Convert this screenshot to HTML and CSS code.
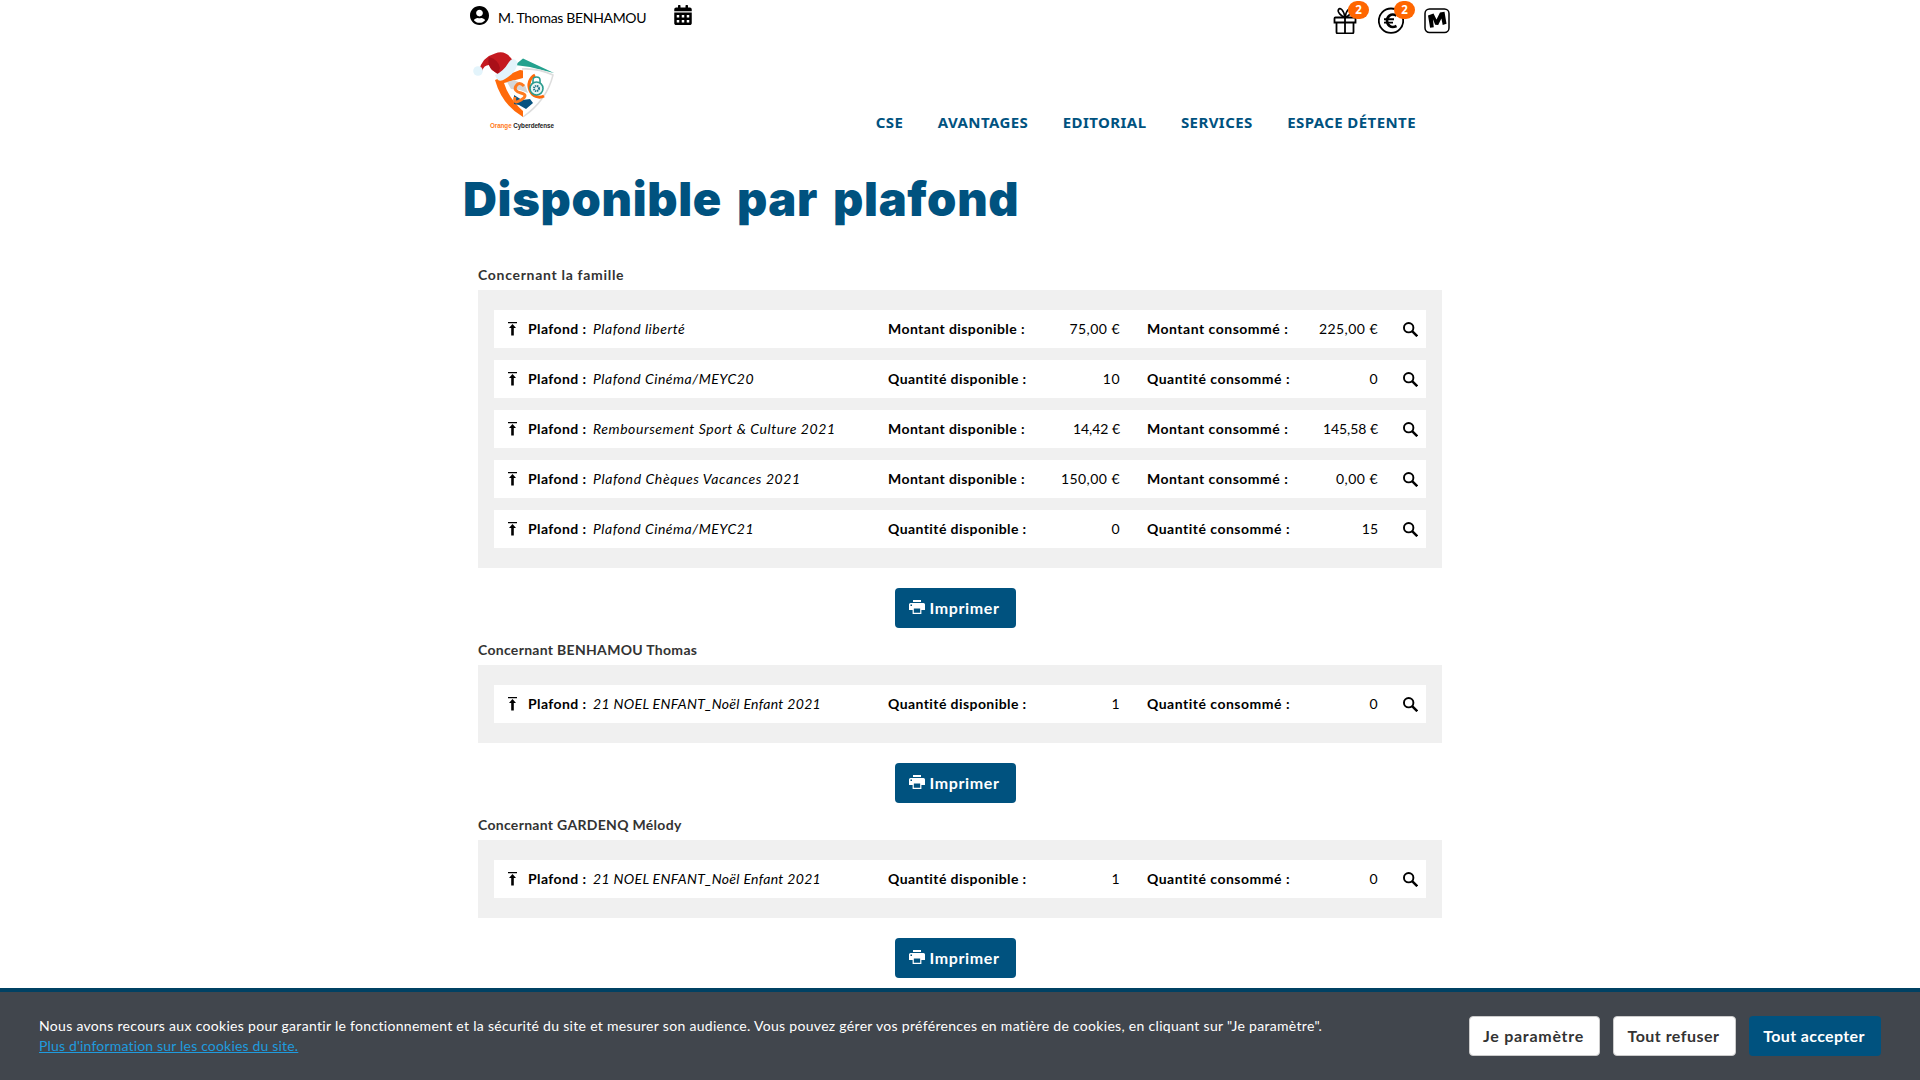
FILE: index.html
```html
<!DOCTYPE html>
<html lang="fr">
<head>
<meta charset="utf-8">
<title>Disponible par plafond</title>
<link rel="stylesheet" href="styles.css">
</head>
<body>
<svg class="sprite" aria-hidden="true">
  <symbol id="top" viewBox="0 0 9 14"><path d="M0 0h9v1.200H0zM4.500 2L8 6H5.800v7.500H3.200V6H1z"/></symbol>
  <symbol id="search" viewBox="0 0 14 14"><circle cx="5.300" cy="5.300" r="4.400" fill="none" stroke="#000" stroke-width="1.800"/><path d="M8.300 8.300l5 5" stroke="#000" stroke-width="2.300"/></symbol>
  <symbol id="print" viewBox="0 0 16 14"><path d="M4 0h8v2H4zM1.500 3h13Q16 3 16 4.500V10H0V4.500Q0 3 1.500 3z"/><path d="M4.200 8h7.600v5.300H4.200z" fill="#00527f" stroke="#fff" stroke-width="1.200"/><path d="M1.500 4.500H3V6H1.500z" fill="#00527f"/></symbol>
</svg>
<div class="page">
  <header>
    <div class="topbar">
      <svg class="user-icon" viewBox="0 8 496 496"><path d="M248 8C111 8 0 119 0 256s111 248 248 248 248-111 248-248S385 8 248 8zm0 96c48.600 0 88 39.400 88 88s-39.400 88-88 88-88-39.400-88-88 39.400-88 88-88zm0 344c-58.700 0-111.300-26.600-146.500-68.200 18.800-35.400 55.600-59.800 98.500-59.800 2.400 0 4.800.4 7.100 1.100 13 4.200 26.600 6.900 40.900 6.900 14.300 0 28-2.700 40.900-6.900 2.300-.7 4.700-1.100 7.100-1.100 42.900 0 79.700 24.400 98.500 59.800C359.300 421.400 306.700 448 248 448z"/></svg>
      <span class="user-name">M. Thomas BENHAMOU</span>
      <svg class="cal-icon" viewBox="0 0 448 512"><path fill-rule="evenodd" d="M0 464c0 26.500 21.500 48 48 48h352c26.500 0 48-21.500 48-48V192H0zM64 256h64v64H64zM192 256h64v64h-64zM320 256h64v64h-64zM64 384h64v64H64zM192 384h64v64h-64zM320 384h64v64h-64zM400 64h-48V16c0-8.800-7.200-16-16-16h-32c-8.800 0-16 7.200-16 16v48H160V16c0-8.800-7.200-16-16-16h-32c-8.800 0-16 7.200-16 16v48H48C21.500 64 0 85.500 0 112v48h448v-48c0-26.500-21.500-48-48-48z"/></svg>
      <div class="shortcuts">
        <span class="shortcut"><svg viewBox="0 0 26 28" fill="none" stroke="#000" stroke-width="1.800"><path d="M2.500 12.500q0-1 1-1h19q1 0 1 1v4h-21zM4.500 16.500v9.500q0 1.500 1.500 1.500h14q1.500 0 1.500-1.500v-9.500M13 11.500v16"/><path d="M13 11.500C9 10 5 6 6.500 3.500S12 4 13 11.500zM13 11.500C17 10 21 6 19.500 3.500S14 4 13 11.500z" stroke-width="1.600"/></svg><b class="badge">2</b></span>
        <span class="shortcut"><svg viewBox="0 0 26 28" fill="none" stroke="#000"><circle cx="13" cy="14.700" r="12.200" stroke-width="1.800"/><path d="M18.500 9.500C12.500 6.500 9 11 9 14.700S12.500 23 18.500 20" stroke-width="2.600"/><path d="M6 13.300h10M6 16.600h9" stroke-width="1.900"/></svg><b class="badge">2</b></span>
        <span class="shortcut"><svg viewBox="0 0 26 28"><rect x="1" y="2.900" width="24" height="23.700" rx="4.500" fill="none" stroke="#000" stroke-width="1.500"/><path d="M4 9.500l5.500-2 3 6 3.500-7 4.500-.8 2 12-3.800 1.300-1.300-6.500-3.200 6.500-3-.3-2.300-5.500.9 8-3.700.5z"/></svg></span>
      </div>
    </div>
    <div class="brandbar">
      <svg class="logo" viewBox="0 0 90 84">
        <path d="M45 17L53 10.500 84 25 60 19z" fill="#24a18e"/>
        <path d="M52 21Q68 20 83 27Q77 52 53 69" fill="#fff" stroke="#ddd" stroke-width="1.500"/>
        <path d="M25 32L50 22l3 .5v7.500L34 35Q39 51 53 63v6Q32 57 25 32z" fill="#ff6a0a"/>
        <path d="M37 34l7-2 11 5 3 8-8-3-9-1z" fill="#d4d6d8"/>
        <path d="M44 47l8 5 8-1 3 4-7 6-7-4-5-1z" fill="#07527f"/>
        <path d="M54 38Q49 33 46 38T51 45 51 52 45 49" fill="none" stroke="#ff7a20" stroke-width="3"/>
        <path d="M65 27A10 11 0 1 0 74 48" fill="none" stroke="#ff6a0a" stroke-width="3"/>
        <path d="M63 35v-3q0-3 3.500-3t3.500 3v3" fill="none" stroke="#2b9c8f" stroke-width="1.600"/>
        <circle cx="66.500" cy="40.500" r="6.500" fill="#e8f5f3" stroke="#2b9c8f" stroke-width="1.600"/>
        <circle cx="66.500" cy="40.500" r="2.500" fill="none" stroke="#23758a" stroke-width="2" stroke-dasharray="1.300 .7"/>
        <path d="M9 23Q12 9 25 5.500Q36 1 43 13L29 27 22 22 19 17Q14 17 12 23z" fill="#c51a20"/>
        <path d="M19 9Q29 12 30 20L28 26 21 21Q17 15 19 9z" fill="#a90f18"/>
        <path d="M25 27Q33 24 39 14Q43 8 47.500 14Q48 23 35 31Q28 36 25 27z" fill="#e3f4fb"/>
        <circle cx="8" cy="23" r="4.800" fill="#e3f4fb"/>
        <text x="20" y="80" class="logo-text" textLength="64"><tspan fill="#ff7a20">Orange</tspan> Cyberdefense</text>
      </svg>
      <nav><a>CSE</a><a>AVANTAGES</a><a>EDITORIAL</a><a>SERVICES</a><a>ESPACE DÉTENTE</a></nav>
    </div>
  </header>
  <h1>Disponible par plafond</h1>
  <main>
    <section>
      <h2 class="wide">Concernant la famille</h2>
      <div class="panel">
        <div class="row"><svg class="top-icon"><use href="#top"/></svg><div class="name"><b>Plafond :</b><i>Plafond liberté</i></div><b>Montant disponible :</b><span class="val">75,00 €</span><b class="used">Montant consommé :</b><span class="val">225,00 €</span><svg class="search-icon"><use href="#search"/></svg></div>
        <div class="row"><svg class="top-icon"><use href="#top"/></svg><div class="name"><b>Plafond :</b><i>Plafond Cinéma/MEYC20</i></div><b>Quantité disponible :</b><span class="val">10</span><b class="used">Quantité consommé :</b><span class="val">0</span><svg class="search-icon"><use href="#search"/></svg></div>
        <div class="row"><svg class="top-icon"><use href="#top"/></svg><div class="name"><b>Plafond :</b><i class="loose">Remboursement Sport &amp; Culture 2021</i></div><b>Montant disponible :</b><span class="val narrow">14,42 €</span><b class="used">Montant consommé :</b><span class="val narrow">145,58 €</span><svg class="search-icon"><use href="#search"/></svg></div>
        <div class="row"><svg class="top-icon"><use href="#top"/></svg><div class="name"><b>Plafond :</b><i class="looser">Plafond Chèques Vacances 2021</i></div><b>Montant disponible :</b><span class="val">150,00 €</span><b class="used">Montant consommé :</b><span class="val">0,00 €</span><svg class="search-icon"><use href="#search"/></svg></div>
        <div class="row"><svg class="top-icon"><use href="#top"/></svg><div class="name"><b>Plafond :</b><i>Plafond Cinéma/MEYC21</i></div><b>Quantité disponible :</b><span class="val">0</span><b class="used">Quantité consommé :</b><span class="val narrow">15</span><svg class="search-icon"><use href="#search"/></svg></div>
      </div>
      <button class="btn print"><svg class="print-icon"><use href="#print"/></svg>Imprimer</button>
    </section>
    <section>
      <h2>Concernant BENHAMOU Thomas</h2>
      <div class="panel">
        <div class="row"><svg class="top-icon"><use href="#top"/></svg><div class="name"><b>Plafond :</b><i class="tight">21 NOEL ENFANT_Noël Enfant 2021</i></div><b>Quantité disponible :</b><span class="val">1</span><b class="used">Quantité consommé :</b><span class="val">0</span><svg class="search-icon"><use href="#search"/></svg></div>
      </div>
      <button class="btn print"><svg class="print-icon"><use href="#print"/></svg>Imprimer</button>
    </section>
    <section>
      <h2>Concernant GARDENQ Mélody</h2>
      <div class="panel">
        <div class="row"><svg class="top-icon"><use href="#top"/></svg><div class="name"><b>Plafond :</b><i class="tight">21 NOEL ENFANT_Noël Enfant 2021</i></div><b>Quantité disponible :</b><span class="val">1</span><b class="used">Quantité consommé :</b><span class="val">0</span><svg class="search-icon"><use href="#search"/></svg></div>
      </div>
      <button class="btn print"><svg class="print-icon"><use href="#print"/></svg>Imprimer</button>
    </section>
  </main>
</div>
<div class="cookies">
  <p>Nous avons recours aux cookies pour garantir le fonctionnement et la sécurité du site et mesurer son audience. Vous pouvez gérer vos préférences en matière de cookies, en cliquant sur "Je paramètre".<br><a class="more">Plus d'information sur les cookies du site.</a></p>
  <div class="choices">
    <button class="btn light settings">Je paramètre</button>
    <button class="btn light refuse">Tout refuser</button>
    <button class="btn accept">Tout accepter</button>
  </div>
</div>
</body>
</html>
```
FILE: styles.css
```css
* { box-sizing: border-box; }
html, body { height: 100%; }
body {
  margin: 0;
  overflow: hidden;
  background: #fff;
  color: #000;
  font: 14px/20px Lato, "Open Sans", sans-serif;
  display: flex;
  flex-direction: column;
}
svg { display: block; flex: none; }
.sprite { width: 0; height: 0; position: absolute; }
.page { flex: 1; width: 994px; margin: 0 auto; min-height: 0; }

.topbar { display: flex; height: 48px; padding-left: 7px; }
.user-icon { width: 19px; height: 19px; margin-top: 6px; }
.user-name { margin: 8px 0 0 9px; width: 176px; letter-spacing: -.32px; }
.cal-icon { width: 18px; height: 20px; margin-top: 5px; }
.shortcuts { display: flex; gap: 20px; margin: 6px 7px 0 auto; }
.shortcut { position: relative; width: 26px; height: 28px; }
.shortcut svg { width: 26px; height: 28px; }
.badge {
  position: absolute;
  left: 16px;
  top: -5px;
  width: 21px;
  height: 18px;
  border-radius: 9px;
  background: #f60;
  color: #fff;
  font: 700 11.5px/18px "Open Sans", sans-serif;
  text-align: center;
}
.brandbar { display: flex; height: 92px; padding-left: 7px; }
.logo { width: 90px; height: 84px; }
.logo-text { font: 700 6.3px "Liberation Sans", sans-serif; fill: #222; }
nav {
  display: flex;
  gap: 34.5px;
  margin: 64px 41px 0 auto;
  color: #00527f;
  font: 700 15px/20px "Noto Sans", sans-serif;
  letter-spacing: .42px;
}

h1 {
  margin: 0;
  height: 120px;
  color: #00527f;
  font: 900 47px/117px Inter, sans-serif;
  letter-spacing: .65px;
  word-spacing: 5px;
}
main { padding: 0 15px; }
h2 { margin: 0; color: #333; font-size: 14px; line-height: 30px; letter-spacing: .3px; }
h2.wide { letter-spacing: .7px; }
section { display: flex; flex-direction: column; margin-bottom: 7px; }
.panel { display: grid; gap: 12px; padding: 20px 16px; margin-bottom: 20px; background: #f0f0f0; }
.row {
  display: grid;
  grid-template-columns: 20px 360px 140px 92px 167px 91px 1fr;
  align-items: center;
  height: 38px;
  padding: 0 8px 0 14px;
  background: #fff;
  letter-spacing: .42px;
}
.name { display: flex; gap: 6px; white-space: nowrap; }
.name b { width: 59px; letter-spacing: .4px; }
.name i { letter-spacing: .52px; }
.name i.loose { letter-spacing: .56px; }
.name i.looser { letter-spacing: .6px; }
.name i.tight { letter-spacing: .33px; }
.val { text-align: right; letter-spacing: .45px; }
.val.narrow { letter-spacing: -.05px; }
.used { padding-left: 27px; white-space: nowrap; letter-spacing: .5px; }
.top-icon { width: 9px; height: 14px; margin-bottom: 1px; }
.search-icon { width: 15px; height: 15px; justify-self: end; }

.btn {
  display: flex;
  align-items: center;
  justify-content: center;
  height: 40px;
  padding: 0;
  border: 0;
  border-radius: 4px;
  background: #00527f;
  color: #fff;
  font: 700 16px/20px Lato, sans-serif;
}
.print { align-self: center; width: 121px; margin-right: 9px; padding-right: 2px; gap: 4px; letter-spacing: .62px; }
.print-icon { width: 16px; height: 14px; margin-top: -3px; fill: #fff; }

.cookies {
  flex: none;
  display: flex;
  justify-content: space-between;
  align-items: center;
  height: 92px;
  padding: 0 39px;
  border-top: 4px solid #004163;
  background: #41464d;
  color: #fff;
}
.cookies p { margin: 0; letter-spacing: .305px; white-space: nowrap; }
.more { color: #1f9bde; text-decoration: underline; letter-spacing: .18px; }
.choices { display: flex; gap: 13px; }
.choices .btn { padding-right: 2px; }
.light { background: #fff; color: #333; border: 1px solid #ccc; }
.settings { width: 131px; letter-spacing: .72px; }
.refuse { width: 123px; letter-spacing: .48px; }
.accept { width: 132px; letter-spacing: .35px; }
```
